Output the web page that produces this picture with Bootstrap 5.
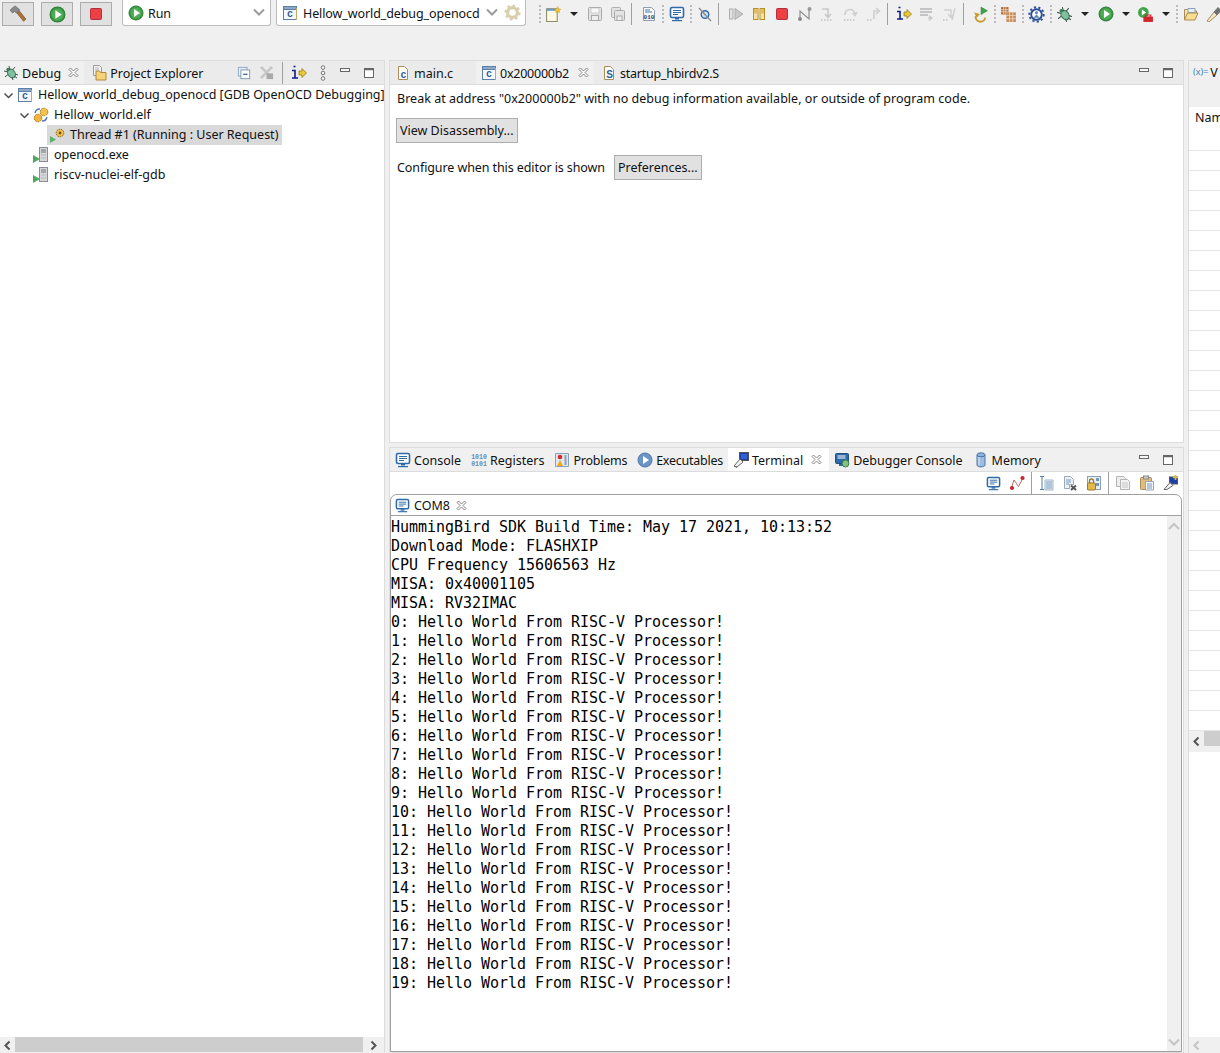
<!DOCTYPE html>
<html lang="en"><head><meta charset="utf-8"><title>Eclipse Debug</title>
<link href="https://cdn.jsdelivr.net/npm/bootstrap@5.3.0/dist/css/bootstrap.min.css" rel="stylesheet">
<style>
html,body{height:1053px;overflow:hidden}
body{background:#f0f0f0;font:12.5px/20px "Noto Sans","Liberation Sans",sans-serif;color:#111}
svg{display:block;flex:none}
.defs{position:absolute;width:0;height:0}
.topbar{height:60px;padding-top:2px;padding-left:2px;align-items:flex-start}
.topbar>*{flex:none}
.sqbtn{width:32px;height:24px;background:#e1e1e1;border:1px solid #adadad;margin-right:7px;display:flex;align-items:center;justify-content:center}
.combo{height:26px;margin-top:-2px;background:#fff;border:1px solid #bdbdbd;border-top:0;border-radius:0 0 3px 3px;display:flex;align-items:center;padding-left:5px;gap:4px}
.combo-run{width:149px;margin-left:3px}.combo-cfg{width:250px;margin-left:5px;gap:5px}
.combo .grow{flex:1;margin-top:3px;letter-spacing:-.1px}
.toolrun{margin-left:11px}
.ti{width:23px;height:24px;display:flex;align-items:center;justify-content:center;flex:none}
.td{width:17px;height:24px;display:flex;align-items:center;justify-content:center;flex:none}
.ts{width:5px;height:24px;display:flex;align-items:center;justify-content:center;flex:none}
.sepline{width:1px;height:22px;background:#a0a0a0;display:block}
.sepdots{width:2px;height:18px;background:repeating-linear-gradient(#bbb 0 2px,transparent 2px 4px)}
.m1{margin-left:1px}.m2{margin-left:2px}.m3{margin-left:3px}
.tri{width:0;height:0;border:4px solid transparent;border-top:4px solid #222;border-bottom:0}
.workspace{height:993px;gap:4px}
.leftcol{width:385px;flex:none}.midcol{width:795px;flex:none;gap:4px}.rightcol{width:32px;flex:none;overflow:hidden}
.pane{background:#fff;border:1px solid #dcdcdc;display:flex;flex-direction:column;min-height:0;overflow:hidden}
.leftcol .pane{border-left:0;border-bottom:0;height:100%}
.tophead{background:#ebebeb;border-bottom:1px solid #dcdcdc;display:flex;align-items:stretch;flex:none;height:24px}
.vtab{display:flex;align-items:center;white-space:nowrap;gap:3px;padding:0 5px}
.vtab>span{margin-top:3px}
.vtab.on{background:#f0f0f0}.vtab.foc{background:#fff;padding-right:7px}
.foc .x,.on .xw{margin-left:5px}
.t-debug{padding-left:3px}.t-proj{padding-left:7px}.t-main{padding-right:23px}.t-start{padding-left:7px}
.tight{letter-spacing:-.25px}
.plain{background:#f0f0f0}
.x{margin-left:4px;width:11px;height:11px}
.on .xw{margin-left:6px}
.spring{flex:1}
.panetools{padding-right:9px}
.tree{flex:1;white-space:nowrap;overflow:hidden}
.trow{height:20px;display:flex;align-items:center;gap:3px}
.trow>span{margin-left:2px}
.l0{padding-left:3px}.l0>span{letter-spacing:-.03px}.l1{padding-left:19px}.l2{padding-left:33px}
.sel{background:#d9d9d9;width:235px;margin-left:47px;padding-left:3px;gap:2px}
.hbar{height:16px;background:#f0f0f0;display:flex;align-items:center;flex:none}
.hbar b{display:block;background:#cdcdcd;height:15px;align-self:flex-start}
.arrow{width:15px;display:flex;justify-content:center;flex:none}
.arrowend{width:21px}
.editor{height:383px;flex:none}
.msg{padding:4px 0 0 7px;height:24px;letter-spacing:.03px}
.eclbtn{background:#e1e1e1;border:1px solid #adadad;border-radius:0;font-size:12.5px;line-height:21px;padding:1px 3px;color:#111;white-space:nowrap}
.eclbtn:hover{background:#e1e1e1;border-color:#adadad;color:#111}
.viewbtn{margin:9px 0 0 6px;display:block}
.prefrow{margin-top:12px;padding-left:7px;gap:9px}
.preftext{letter-spacing:-.09px}
.console{height:606px;flex:none}
.termbar{height:22px;flex:none;justify-content:flex-end;align-items:center}
.termbar .ti{width:24px}
.tframe{flex:1;margin-right:1px;border:1px solid #a0a0a0;border-radius:7px 7px 0 0;display:flex;flex-direction:column;min-height:0}
.tabstrip{height:21px;flex:none;border-bottom:1px solid #a0a0a0}
.comtab{width:89px;height:20px;padding-left:4px;gap:4px;align-items:center;display:flex}
.comtab .x{margin-left:2px}
.comtab>span{margin-top:1px}
.tbody{flex:1;display:flex;min-height:0}
.term{flex:1;margin:0;padding:2px 0 0 0;font:15px/19px "DejaVu Sans Mono",monospace;letter-spacing:-.03px;color:#000;overflow:hidden}
.vbar{width:14px;background:#f0f0f0;display:flex;flex-direction:column;justify-content:space-between;align-items:center;padding:5px 0 3px}
.varshead{height:46px;background:#f0f0f0;padding:2px 0 0 4px;display:flex;align-items:flex-start;flex:none;gap:2px;white-space:nowrap}
.varstable{flex:none}
.namecell{height:44px;padding:1px 0 0 6px;border-bottom:1px solid #e6e6e6;white-space:nowrap}
.cellrow{height:20px;border-bottom:1px solid #e6e6e6}
.rightcol .pane{height:100%;border-bottom:0;border-right:0}
.varsfill{flex:1}
.xlab{font-size:9px;line-height:12px;color:#3b86bb;margin-top:3px}
.rhb{height:21px}
</style></head><body>
<svg class="defs" width="0" height="0"><defs>
<symbol id="hammer" viewBox="0 0 16 16"><path d="M7 7l2-2 6 7.500-2 2z" fill="#a9713a" stroke="#7a4c20" stroke-width=".6"/><path d="M1 4.500L5 1l1 .3 3.500 3-2.800 3L5 5.600 3.200 7.200z" fill="#8a8a8a" stroke="#5a5a5a" stroke-width=".6"/></symbol>
<symbol id="play" viewBox="0 0 16 16"><circle cx="8" cy="8" r="7" fill="#3a9a45" stroke="#2a7a33"/><circle cx="8" cy="8" r="5.400" fill="#4fae55"/><path d="M6 4l6 4-6 4z" fill="#fff"/></symbol>
<symbol id="stopbtn" viewBox="0 0 16 16"><rect x="2.500" y="2.500" width="11" height="11" rx="1" fill="#e2434b" stroke="#b5303a"/><rect x="4" y="4" width="8" height="8" fill="#ef3f45"/></symbol>
<symbol id="cfile" viewBox="0 0 16 16"><rect x="1.500" y="1.500" width="13" height="13" fill="#f4f8fc" stroke="#5c7fa8"/><rect x="1.500" y="1.500" width="13" height="3" fill="#8ea9c8" stroke="#5c7fa8"/><rect x="14" y="3" width="1" height="12" fill="#c9a860"/><text x="8" y="12.400" font-family="Liberation Mono" font-weight="700" font-size="10" text-anchor="middle" fill="#2d5f96">c</text></symbol>
<symbol id="mainc" viewBox="0 0 16 16"><path d="M3.500 1.500h6l3 3v10h-9z" fill="#fff" stroke="#a98d57"/><text x="8.500" y="12.500" font-family="Liberation Mono" font-weight="700" font-size="10" text-anchor="middle" fill="#2d5f96">c</text></symbol>
<symbol id="sfile" viewBox="0 0 16 16"><path d="M3.500 1.500h6l3 3v10h-9z" fill="#fff" stroke="#a98d57"/><text x="8.500" y="12.500" font-family="Liberation Sans" font-weight="700" font-size="10" text-anchor="middle" fill="#2d5f96">S</text></symbol>
<symbol id="gear" viewBox="0 0 16 16"><circle cx="8" cy="8" r="4.600" fill="none" stroke="#d9cfae" stroke-width="3"/><circle cx="8" cy="8" r="6.400" fill="none" stroke="#d9cfae" stroke-width="2.400" stroke-dasharray="2.400 2.600"/></symbol>
<symbol id="newf" viewBox="0 0 16 16"><path d="M1.500 2.500h10v12h-10z" fill="#fdf8e4" stroke="#8d8d6a"/><path d="M1.500 2.500h10v2h-10z" fill="#6e97c2"/><path d="M12 .5l.9 2 2 .5-1.400 1.300.3 2-1.800-1-1.800 1 .3-2L9 3l2-.5z" fill="#f4c52b" stroke="#c5951a" stroke-width=".4"/></symbol>
<symbol id="save" viewBox="0 0 16 16"><rect x="1.500" y="1.500" width="13" height="13" rx="1" fill="#e3e3e3" stroke="#aaa"/><rect x="4" y="2" width="8" height="5" fill="#f7f7f7" stroke="#bbb" stroke-width=".6"/><rect x="4.500" y="9.500" width="7" height="5" fill="#eee" stroke="#aaa"/></symbol>
<symbol id="saveall" viewBox="0 0 16 16"><rect x="1.500" y="1.500" width="9" height="10" rx="1" fill="#e3e3e3" stroke="#b0b0b0"/><rect x="4.500" y="4.500" width="10" height="10" rx="1" fill="#e3e3e3" stroke="#aaa"/><rect x="7" y="10" width="5" height="4.500" fill="#eee" stroke="#aaa"/></symbol>
<symbol id="bin010" viewBox="0 0 16 16"><path d="M2.500 1.500h8l3 3v10h-11z" fill="#f7f7f7" stroke="#8f9cae"/><path d="M4 4h5M4 6h7" stroke="#4a7eb0"/><text x="8" y="13.400" font-family="Liberation Mono" font-weight="700" font-size="6" text-anchor="middle" fill="#1f3f6e">010</text></symbol>
<symbol id="monitor" viewBox="0 0 16 16"><rect x="1.500" y="1.500" width="13" height="10" rx="1.500" fill="#fff" stroke="#2f6aa8" stroke-width="1.600"/><path d="M4 4.500h8M4 6.500h8M4 8.500h5" stroke="#2f6aa8"/><path d="M6 12h4v1.500H6z" fill="#2f6aa8"/><path d="M3 14h10v1.200H3z" fill="#2f6aa8"/></symbol>
<symbol id="skip" viewBox="0 0 16 16"><circle cx="8" cy="8.500" r="3.800" fill="#cfe0ee" stroke="#2f6aa8" stroke-width="1.400"/><path d="M2 2l12 13" stroke="#8a8a8a" stroke-width="1.300"/></symbol>
<symbol id="resume" viewBox="0 0 16 16"><rect x="1.500" y="3" width="3.500" height="10" fill="#e2e2e2" stroke="#aeaeae"/><path d="M7 2.500L15 8l-8 5.500z" fill="#c8c8c8" stroke="#aeaeae"/></symbol>
<symbol id="suspend" viewBox="0 0 16 16"><rect x="2.500" y="2.500" width="4.500" height="11" fill="#f6e2a4" stroke="#b9912a"/><rect x="3" y="3" width="3.500" height="4.500" fill="#e3bd5e"/><rect x="9" y="2.500" width="4.500" height="11" fill="#f6e2a4" stroke="#b9912a"/><rect x="9.500" y="3" width="3.500" height="4.500" fill="#e3bd5e"/></symbol>
<symbol id="disc" viewBox="0 0 16 16"><path d="M3 13V5l9 8V3" fill="none" stroke="#8f8f8f" stroke-width="1.200"/><circle cx="3" cy="13" r="2" fill="#888"/><circle cx="12.500" cy="3" r="2" fill="#999"/></symbol>
<symbol id="into" viewBox="0 0 16 16"><path d="M2 3h6v8M5 8l3 3.500L11 8" fill="none" stroke="#c9c9c9" stroke-width="1.600"/><path d="M1 14h1.500M4 14h1.500M7 14h1.500M10 14h1.500" stroke="#aaa"/></symbol>
<symbol id="over" viewBox="0 0 16 16"><path d="M2 9a5 5 0 0 1 10-1M9.500 7l2.500 2.500L14 6" fill="none" stroke="#cfcfcf" stroke-width="1.600"/><path d="M1 14h1.500M4 14h1.500M7 14h1.500M10 14h1.500" stroke="#aaa"/></symbol>
<symbol id="ret" viewBox="0 0 16 16"><path d="M8 13V5h5M10 2l3.500 3L10 8" fill="none" stroke="#cfcfcf" stroke-width="1.600"/><path d="M1 14h1.500M4 14h1.500" stroke="#aaa"/></symbol>
<symbol id="iarrow" viewBox="0 0 16 16"><path d="M1 5.500h3v7M1 13h6M2.500 1.500h2" fill="none" stroke="#0b1e8a" stroke-width="1.600"/><path d="M8 6h3V3.500L15.500 8 11 12.500V10H8z" fill="#e8c93a" stroke="#8a6d10" stroke-width=".7"/></symbol>
<symbol id="lines" viewBox="0 0 16 16"><path d="M1 3h12M1 6h12M1 9h8" stroke="#b5b5b5" stroke-width="1.300"/><path d="M9 12h3M10 9.500l3 2.500-3 2.500" fill="none" stroke="#c9c9c9" stroke-width="1.300"/></symbol>
<symbol id="stepf" viewBox="0 0 16 16"><path d="M2 4h7v7M6 8l3 3.500 3-3.500M13 2l-3 12" fill="none" stroke="#cfcfcf" stroke-width="1.400"/><path d="M1 14h1.500M4 14h1.500" stroke="#aaa"/></symbol>
<symbol id="drop2" viewBox="0 0 16 16"><path d="M3.500 9.500a4.500 4.500 0 1 0 9 1.500" fill="none" stroke="#c79a27" stroke-width="1.800"/><path d="M2 6l2.500 5 3-3.500z" fill="#c79a27"/><path d="M8.500 1v7l6-3.500z" fill="#3fa34a" stroke="#2a7a33" stroke-width=".5"/></symbol>
<symbol id="grid" viewBox="0 0 16 16"><path d="M1 1h7v7H1z" fill="#b06a36"/><path d="M6 6h9v9H6z" fill="#c98d58"/><path d="M3.500 1v7M5.500 1v7M1 3.500h7M1 5.500h7M9 6v9M12 6v9M6 9h9M6 12h9" stroke="#f1dfc9" stroke-width=".7"/></symbol>
<symbol id="gearblue" viewBox="0 0 16 16"><circle cx="8" cy="8" r="5" fill="#fff" stroke="#2a4f98" stroke-width="1.800"/><circle cx="8" cy="8" r="6.800" fill="none" stroke="#2a4f98" stroke-width="1.800" stroke-dasharray="2 2.200"/><circle cx="8" cy="6.300" r="1.400" fill="#5a84b0"/><path d="M5 11l3-3 3 3z" fill="#5a84b0"/></symbol>
<symbol id="bug" viewBox="0 0 16 16"><ellipse cx="8.500" cy="8.500" rx="3.500" ry="4.800" transform="rotate(-35 8.500 8.500)" fill="#7fc0a0" stroke="#3c7a5b"/><path d="M1 6l4 1M6 1l1 4M15 10l-3-1M10 15l-1-3M2 12l3-2.500M12 2l-2.500 3M14 13l-3-2" stroke="#3c5a4b"/><circle cx="5" cy="4.500" r="1.700" fill="#3c7a5b"/></symbol>
<symbol id="ext" viewBox="0 0 16 16"><circle cx="6" cy="6" r="5" fill="#3fa34a"/><path d="M4.500 3l4 3-4 3z" fill="#fff"/><rect x="6" y="10" width="9" height="5" fill="#d3252d"/><rect x="8" y="8.500" width="5" height="2" fill="none" stroke="#d3252d"/></symbol>
<symbol id="folder" viewBox="0 0 16 16"><path d="M1.500 14V3.500h5l1 1.500h6v2" fill="#f6e4ae" stroke="#a98d57"/><path d="M5 2.500h7v4H5z" fill="#e6eef6" stroke="#8aa1b7"/><path d="M1.500 14l3-7h10.500l-3 7z" fill="#f8dc90" stroke="#a98d57"/></symbol>
<symbol id="torch" viewBox="0 0 16 16"><path d="M1 15l7-9 3 3-8 7z" fill="#eee6c8" stroke="#a98d57"/><path d="M8 6l4-4.500 3 3-4 4.500z" fill="#6f6f6f" stroke="#777"/></symbol>
<symbol id="project" viewBox="0 0 16 16"><path d="M2.500 .5h6l2 2v8h-8z" fill="#f3f3f3" stroke="#9a9a9a"/><path d="M4 3h4M4 5h4" stroke="#b5b5b5"/><path d="M5 7V6h3.500l1 1.500H15v7.500H5z" fill="#f6d27a" stroke="#ad8a38"/></symbol>
<symbol id="collapse" viewBox="0 0 16 16"><rect x="1.500" y="1.500" width="10" height="10" fill="#e9eef4" stroke="#86a2c0"/><rect x="4.500" y="4.500" width="10" height="10" fill="#fff" stroke="#6f92b6"/><path d="M7 9.500h5" stroke="#315f90" stroke-width="1.400"/></symbol>
<symbol id="removeall" viewBox="0 0 16 16"><path d="M2 2l12 12M14 2L2 14" stroke="#c7c7c7" stroke-width="3"/><rect x="8" y="9" width="7" height="6" fill="#a9a9a9"/></symbol>
<symbol id="vmenu" viewBox="0 0 16 16"><circle cx="8" cy="2.500" r="1.800" fill="#f5f5f5" stroke="#777"/><circle cx="8" cy="8" r="1.800" fill="#f5f5f5" stroke="#777"/><circle cx="8" cy="13.500" r="1.800" fill="#f5f5f5" stroke="#777"/></symbol>
<symbol id="minv" viewBox="0 0 12 12"><rect x="1.500" y="1.500" width="9" height="3" fill="#f7f7f7" stroke="#666"/></symbol>
<symbol id="maxv" viewBox="0 0 12 12"><rect x="1.500" y="1.500" width="9" height="9" fill="#fff" stroke="#666"/><path d="M1.500 2.500h9" stroke="#666" stroke-width="1.500"/></symbol>
<symbol id="xicon" viewBox="0 0 11 11"><path d="M1 2.500L2.500 1l3 3 3-3L10 2.500l-3 3 3 3L8.500 10l-3-3-3 3L1 8.500l3-3z" fill="#fff" stroke="#777" stroke-width=".9"/></symbol>
<symbol id="chevd" viewBox="0 0 11 11"><path d="M1.500 3.500l4 4 4-4" fill="none" stroke="#4d4d4d" stroke-width="1.500"/></symbol>
<symbol id="chevdg" viewBox="0 0 14 11"><path d="M2 2.500l5 5 5-5" fill="none" stroke="#9c9c9c" stroke-width="2"/></symbol>
<symbol id="chevdl" viewBox="0 0 14 11"><path d="M2 2.500l5 5 5-5" fill="none" stroke="#c4c4c4" stroke-width="2"/></symbol>
<symbol id="chevul" viewBox="0 0 14 11"><path d="M2 8l5-5 5 5" fill="none" stroke="#c4c4c4" stroke-width="2"/></symbol>
<symbol id="chevl" viewBox="0 0 11 11"><path d="M7.500 1.500l-4 4 4 4" fill="none" stroke="#555" stroke-width="2"/></symbol>
<symbol id="chevr" viewBox="0 0 11 11"><path d="M3.500 1.500l4 4-4 4" fill="none" stroke="#555" stroke-width="2"/></symbol>
<symbol id="chevll" viewBox="0 0 11 11"><path d="M7.500 1.500l-4 4 4 4" fill="none" stroke="#c4c4c4" stroke-width="2"/></symbol>
<symbol id="proc" viewBox="0 0 16 16"><circle cx="11" cy="5" r="3.800" fill="#f3c24e" stroke="#a9791a" stroke-dasharray="1.600 .8"/><circle cx="5" cy="11" r="3.800" fill="#efb53c" stroke="#a9791a" stroke-dasharray="1.600 .8"/><path d="M2 6a5 5 0 0 1 5-4M14 10a5 5 0 0 1-5 4" fill="none" stroke="#4c79b5" stroke-width="1.300"/></symbol>
<symbol id="thread" viewBox="0 0 16 16"><circle cx="10" cy="6" r="3.800" fill="#f0c04f" stroke="#8a5d12" stroke-dasharray="1.500 .8"/><circle cx="10" cy="6" r="1.400" fill="#7a4c10"/><path d="M0 9v7l6-3.500z" fill="#5cb070"/></symbol>
<symbol id="exe" viewBox="0 0 16 16"><rect x="6.500" y=".5" width="8" height="14" fill="#d7d7d7" stroke="#8a8f97"/><path d="M8 3h5M8 5h5" stroke="#6d7680"/><path d="M8 8h5M8 11h5" stroke="#b3b7bc"/><path d="M0 8v8l7-4z" fill="#4fa860"/></symbol>
<symbol id="regs" viewBox="0 0 16 16"><text x="8" y="7" font-family="Liberation Mono" font-weight="700" font-size="6.500" text-anchor="middle" fill="#5b8ebd">1010</text><text x="8" y="14" font-family="Liberation Mono" font-weight="700" font-size="6.500" text-anchor="middle" fill="#5b8ebd">0101</text></symbol>
<symbol id="problems" viewBox="0 0 16 16"><path d="M1.500 1.500h13v13h-13z" fill="#dfe7ef" stroke="#8aa1b7"/><circle cx="6" cy="5" r="2.300" fill="#d8272f"/><path d="M6 8l3 6H3z" fill="#f2a71b"/><path d="M11.500 3v10" stroke="#8aa1b7" stroke-width="2"/></symbol>
<symbol id="execs" viewBox="0 0 16 16"><circle cx="8" cy="8" r="7" fill="#6b95c9" stroke="#4d76a8"/><path d="M6 4l6 4-6 4z" fill="#fff"/></symbol>
<symbol id="term" viewBox="0 0 16 16"><rect x="6.500" y=".5" width="9" height="8" fill="#1f3fa8" stroke="#555"/><rect x="8" y="2" width="6" height="5" fill="#2c63d8"/><path d="M1 14l6-7 3 3-6 5z" fill="#f1f1f1" stroke="#666"/><path d="M1 14l3 1.500" stroke="#666"/></symbol>
<symbol id="dbgcon" viewBox="0 0 16 16"><rect x="1.500" y="1.500" width="13" height="10" rx="1" fill="#2f6aa8" stroke="#1f4f85"/><path d="M3.500 4h8M3.500 6h8" stroke="#fff"/><path d="M5 12h4v2H5z" fill="#2f6aa8"/><ellipse cx="11.500" cy="11.500" rx="3.300" ry="3.500" fill="#84c284" stroke="#3e7f4f"/></symbol>
<symbol id="memory" viewBox="0 0 16 16"><path d="M4 3v10c0 2.500 8 2.500 8 0V3" fill="#9cbde0" stroke="#4a76a8"/><ellipse cx="8" cy="2.800" rx="4" ry="2" fill="#8fb2d8" stroke="#4a76a8"/><path d="M6 5v8" stroke="#dfeaf5"/></symbol>
<symbol id="pin" viewBox="0 0 16 16"><path d="M2.500 12.500L5 5l4.500 6.500L14 3" fill="none" stroke="#bf666a"/><circle cx="3" cy="13" r="2.100" fill="#c8272f"/><circle cx="13.500" cy="3" r="2.100" fill="#c8272f"/></symbol>
<symbol id="sizef" viewBox="0 0 16 16"><path d="M2 1.500h4M4 1.500v13M2 14.500h4" stroke="#4f81b5"/><path d="M7 5h8v10H7z" fill="#eef3f8" stroke="#a4b4c5"/><path d="M8 7h6M8 9h6M8 11h6M8 13h6" stroke="#7098bf"/></symbol>
<symbol id="clear" viewBox="0 0 16 16"><path d="M2.500 1.500h6l3 3v5h-4v4h-5z" fill="#eef2f6" stroke="#99a9b9"/><path d="M4 5h5M4 7h5M4 9h3" stroke="#7098bf"/><path d="M9 10.500l5 4.500M14 10.500l-5 4.500" stroke="#555" stroke-width="2"/></symbol>
<symbol id="lock" viewBox="0 0 16 16"><rect x="1.500" y="1.500" width="13" height="13" fill="#e7eef5" stroke="#8aa1b7"/><rect x="10" y="3" width="3" height="3" fill="#7098bf"/><rect x="10" y="8" width="3" height="3" fill="#7098bf"/><rect x="1.500" y="8" width="8" height="7" rx="1" fill="#e2b94a" stroke="#9d7c20"/><path d="M3.500 8V6a2 2 0 0 1 4 0v2" fill="none" stroke="#9d7c20" stroke-width="1.300"/></symbol>
<symbol id="copy" viewBox="0 0 16 16"><path d="M1.500 1.500h7l2 2v8h-9z" fill="#eee" stroke="#b5b5b5"/><path d="M5.500 4.500h7l2 2v8h-9z" fill="#f3f3f3" stroke="#b5b5b5"/><path d="M7 8h6M7 10h6M7 12h6" stroke="#c5c5c5"/></symbol>
<symbol id="paste" viewBox="0 0 16 16"><rect x="1.500" y="2.500" width="11" height="12" rx="1" fill="#e0bd7f" stroke="#a98d57"/><rect x="4.500" y="1" width="5" height="3" fill="#ccc" stroke="#888"/><path d="M6.500 6.500h8v8.500h-8z" fill="#f4f7fa" stroke="#94a7ba"/><path d="M8 9h5M8 11h5M8 13h5" stroke="#7098bf"/></symbol>
<symbol id="newterm" viewBox="0 0 16 16"><rect x="6.500" y="2" width="8" height="7" fill="#1f3fa8" stroke="#555"/><path d="M1 14.500l6-7 3 3-6 4z" fill="#f1f1f1" stroke="#666"/><path d="M12.500 0v5M10 2.500h5" stroke="#d6c02a" stroke-width="1.600"/></symbol>
</defs></svg>

<div class="topbar d-flex">
  <div class="sqbtn"><svg width="18" height="18"><use href="#hammer"/></svg></div>
  <div class="sqbtn"><svg width="17" height="17"><use href="#play"/></svg></div>
  <div class="sqbtn"><svg width="16" height="16"><use href="#stopbtn"/></svg></div>
  <div class="combo combo-run"><svg width="16" height="16"><use href="#play"/></svg><span class="grow">Run</span><svg width="14" height="11" class="me-1"><use href="#chevdg"/></svg></div>
  <div class="combo combo-cfg"><svg width="16" height="16"><use href="#cfile"/></svg><span class="grow">Hellow_world_debug_openocd</span><svg width="14" height="11"><use href="#chevdg"/></svg><svg width="17" height="17" class="me-1"><use href="#gear"/></svg></div>
  <div class="d-flex toolrun">
    <div class="ts"><i class="sepdots"></i></div>
    <div class="ti"><svg width="17" height="17"><use href="#newf"/></svg></div><div class="td"><i class="tri"></i></div>
    <div class="ti m1"><svg width="16" height="16"><use href="#save"/></svg></div><div class="ti"><svg width="16" height="16"><use href="#saveall"/></svg></div>
    <div class="ts"><i class="sepline"></i></div>
    <div class="ti m3"><svg width="16" height="16"><use href="#bin010"/></svg></div>
    <div class="ts"><i class="sepdots"></i></div>
    <div class="ti"><svg width="16" height="16"><use href="#monitor"/></svg></div>
    <div class="ts"><i class="sepdots"></i></div>
    <div class="ti"><svg width="16" height="16"><use href="#skip"/></svg></div>
    <div class="ts"><i class="sepline"></i></div>
    <div class="ti m3"><svg width="16" height="16"><use href="#resume"/></svg></div><div class="ti"><svg width="16" height="16"><use href="#suspend"/></svg></div><div class="ti"><svg width="16" height="16"><use href="#stopbtn"/></svg></div><div class="ti"><svg width="16" height="16"><use href="#disc"/></svg></div><div class="ti"><svg width="16" height="16"><use href="#into"/></svg></div><div class="ti"><svg width="16" height="16"><use href="#over"/></svg></div><div class="ti"><svg width="16" height="16"><use href="#ret"/></svg></div>
    <div class="ts"><i class="sepline"></i></div>
    <div class="ti m2"><svg width="16" height="16"><use href="#iarrow"/></svg></div><div class="ti"><svg width="16" height="16"><use href="#lines"/></svg></div><div class="ti"><svg width="16" height="16"><use href="#stepf"/></svg></div>
    <div class="ts"><i class="sepline"></i></div>
    <div class="ti m3"><svg width="17" height="17"><use href="#drop2"/></svg></div>
    <div class="ts"><i class="sepdots"></i></div>
    <div class="ti"><svg width="17" height="17"><use href="#grid"/></svg></div>
    <div class="ts"><i class="sepdots"></i></div>
    <div class="ti"><svg width="17" height="17"><use href="#gearblue"/></svg></div>
    <div class="ts"><i class="sepdots"></i></div>
    <div class="ti"><svg width="17" height="17"><use href="#bug"/></svg></div><div class="td"><i class="tri"></i></div>
    <div class="ti m1"><svg width="16" height="16"><use href="#play"/></svg></div><div class="td"><i class="tri"></i></div>
    <div class="ti"><svg width="17" height="17"><use href="#ext"/></svg></div><div class="td"><i class="tri"></i></div>
    <div class="ts"><i class="sepdots"></i></div>
    <div class="ti"><svg width="16" height="16"><use href="#folder"/></svg></div><div class="ti"><svg width="16" height="16"><use href="#torch"/></svg></div>
  </div>
</div>

<div class="workspace d-flex">
  <div class="leftcol">
    <div class="pane">
      <div class="tophead">
        <div class="vtab on t-debug"><svg width="16" height="16"><use href="#bug"/></svg><span>Debug</span><svg class="x" width="11" height="11"><use href="#xicon"/></svg></div>
        <div class="vtab t-proj"><svg width="16" height="16"><use href="#project"/></svg><span>Project Explorer</span></div>
        <div class="spring"></div>
        <div class="d-flex align-items-center gap-2 panetools">
          <svg width="14" height="14"><use href="#collapse"/></svg><svg width="15" height="15"><use href="#removeall"/></svg><i class="sepline"></i>
          <svg width="16" height="16"><use href="#iarrow"/></svg><svg width="16" height="16"><use href="#vmenu"/></svg>
          <svg class="me-1" width="12" height="12"><use href="#minv"/></svg><svg width="12" height="12"><use href="#maxv"/></svg>
        </div>
      </div>
      <div class="tree">
        <div class="trow l0"><svg width="11" height="11"><use href="#chevd"/></svg><svg width="16" height="16"><use href="#cfile"/></svg><span>Hellow_world_debug_openocd [GDB OpenOCD Debugging]</span></div>
        <div class="trow l1"><svg width="11" height="11"><use href="#chevd"/></svg><svg width="16" height="16"><use href="#proc"/></svg><span>Hellow_world.elf</span></div>
        <div class="trow sel"><svg width="16" height="16"><use href="#thread"/></svg><span>Thread #1 (Running : User Request)</span></div>
        <div class="trow l2"><svg width="16" height="16"><use href="#exe"/></svg><span>openocd.exe</span></div>
        <div class="trow l2"><svg width="16" height="16"><use href="#exe"/></svg><span>riscv-nuclei-elf-gdb</span></div>
      </div>
      <div class="hbar"><span class="arrow"><svg width="11" height="11"><use href="#chevl"/></svg></span><b class="flex-grow-1"></b><span class="arrow arrowend"><svg width="11" height="11"><use href="#chevr"/></svg></span></div>
    </div>
  </div>

  <div class="midcol d-flex flex-column">
    <div class="pane editor">
      <div class="tophead">
        <div class="vtab t-main"><svg width="16" height="16"><use href="#mainc"/></svg><span>main.c</span></div>
        <div class="vtab on"><svg width="16" height="16"><use href="#cfile"/></svg><span class="tight">0x200000b2</span><svg class="x xw" width="11" height="11"><use href="#xicon"/></svg></div>
        <div class="vtab t-start"><svg width="16" height="16"><use href="#sfile"/></svg><span class="tight">startup_hbirdv2.S</span></div>
        <div class="spring"></div>
        <div class="d-flex align-items-center gap-2 panetools"><svg class="me-1" width="12" height="12"><use href="#minv"/></svg><svg width="12" height="12"><use href="#maxv"/></svg></div>
      </div>
      <div class="msg">Break at address "0x200000b2" with no debug information available, or outside of program code.</div>
      <button type="button" class="btn eclbtn viewbtn align-self-start">View Disassembly...</button>
      <div class="d-flex align-items-center prefrow"><span class="preftext">Configure when this editor is shown</span><button type="button" class="btn eclbtn">Preferences...</button></div>
    </div>

    <div class="pane console">
      <div class="tophead plain">
        <div class="vtab"><svg width="16" height="16"><use href="#monitor"/></svg><span>Console</span></div>
        <div class="vtab"><svg width="16" height="16"><use href="#regs"/></svg><span>Registers</span></div>
        <div class="vtab"><svg width="16" height="16"><use href="#problems"/></svg><span class="tight">Problems</span></div>
        <div class="vtab"><svg width="16" height="16"><use href="#execs"/></svg><span class="tight">Executables</span></div>
        <div class="vtab foc"><svg width="16" height="16"><use href="#term"/></svg><span>Terminal</span><svg class="x" width="11" height="11"><use href="#xicon"/></svg></div>
        <div class="vtab"><svg width="16" height="16"><use href="#dbgcon"/></svg><span>Debugger Console</span></div>
        <div class="vtab"><svg width="16" height="16"><use href="#memory"/></svg><span>Memory</span></div>
        <div class="spring"></div>
        <div class="d-flex align-items-center gap-2 panetools"><svg class="me-1" width="12" height="12"><use href="#minv"/></svg><svg width="12" height="12"><use href="#maxv"/></svg></div>
      </div>
      <div class="termbar d-flex">
        <div class="ti"><svg width="15" height="15"><use href="#monitor"/></svg></div><div class="ti"><svg width="16" height="16"><use href="#pin"/></svg></div>
        <div class="ts"><i class="sepline"></i></div>
        <div class="ti"><svg width="16" height="16"><use href="#sizef"/></svg></div><div class="ti"><svg width="16" height="16"><use href="#clear"/></svg></div><div class="ti"><svg width="16" height="16"><use href="#lock"/></svg></div>
        <div class="ts"><i class="sepline"></i></div>
        <div class="ti"><svg width="16" height="16"><use href="#copy"/></svg></div><div class="ti"><svg width="16" height="16"><use href="#paste"/></svg></div><div class="ti"><svg width="16" height="16"><use href="#newterm"/></svg></div>
      </div>
      <div class="tframe">
        <div class="tabstrip"><div class="comtab"><svg width="15" height="15"><use href="#monitor"/></svg><span>COM8</span><svg class="x" width="11" height="11"><use href="#xicon"/></svg></div></div>
        <div class="tbody">
<pre class="term">HummingBird SDK Build Time: May 17 2021, 10:13:52
Download Mode: FLASHXIP
CPU Frequency 15606563 Hz
MISA: 0x40001105
MISA: RV32IMAC
0: Hello World From RISC-V Processor!
1: Hello World From RISC-V Processor!
2: Hello World From RISC-V Processor!
3: Hello World From RISC-V Processor!
4: Hello World From RISC-V Processor!
5: Hello World From RISC-V Processor!
6: Hello World From RISC-V Processor!
7: Hello World From RISC-V Processor!
8: Hello World From RISC-V Processor!
9: Hello World From RISC-V Processor!
10: Hello World From RISC-V Processor!
11: Hello World From RISC-V Processor!
12: Hello World From RISC-V Processor!
13: Hello World From RISC-V Processor!
14: Hello World From RISC-V Processor!
15: Hello World From RISC-V Processor!
16: Hello World From RISC-V Processor!
17: Hello World From RISC-V Processor!
18: Hello World From RISC-V Processor!
19: Hello World From RISC-V Processor!</pre>
          <div class="vbar"><svg width="14" height="11"><use href="#chevul"/></svg><svg width="14" height="11"><use href="#chevdl"/></svg></div>
        </div>
      </div>
    </div>
  </div>

  <div class="rightcol">
    <div class="pane">
      <div class="varshead"><span class="xlab">(x)=</span><span>V</span></div>
      <div class="varstable">
        <div class="namecell">Name</div>
        <div class="cellrow"></div><div class="cellrow"></div><div class="cellrow"></div><div class="cellrow"></div><div class="cellrow"></div><div class="cellrow"></div><div class="cellrow"></div><div class="cellrow"></div><div class="cellrow"></div><div class="cellrow"></div><div class="cellrow"></div><div class="cellrow"></div><div class="cellrow"></div><div class="cellrow"></div><div class="cellrow"></div><div class="cellrow"></div><div class="cellrow"></div><div class="cellrow"></div><div class="cellrow"></div><div class="cellrow"></div><div class="cellrow"></div><div class="cellrow"></div><div class="cellrow"></div><div class="cellrow"></div><div class="cellrow"></div><div class="cellrow"></div><div class="cellrow"></div><div class="cellrow"></div><div class="cellrow"></div>
      </div>
      <div class="hbar rhb"><span class="arrow"><svg width="11" height="11"><use href="#chevl"/></svg></span><b class="flex-grow-1"></b></div>
      <div class="varsfill"></div>
      <div class="hbar"><span class="arrow"><svg width="11" height="11"><use href="#chevll"/></svg></span></div>
    </div>
  </div>
</div>
</body></html>
